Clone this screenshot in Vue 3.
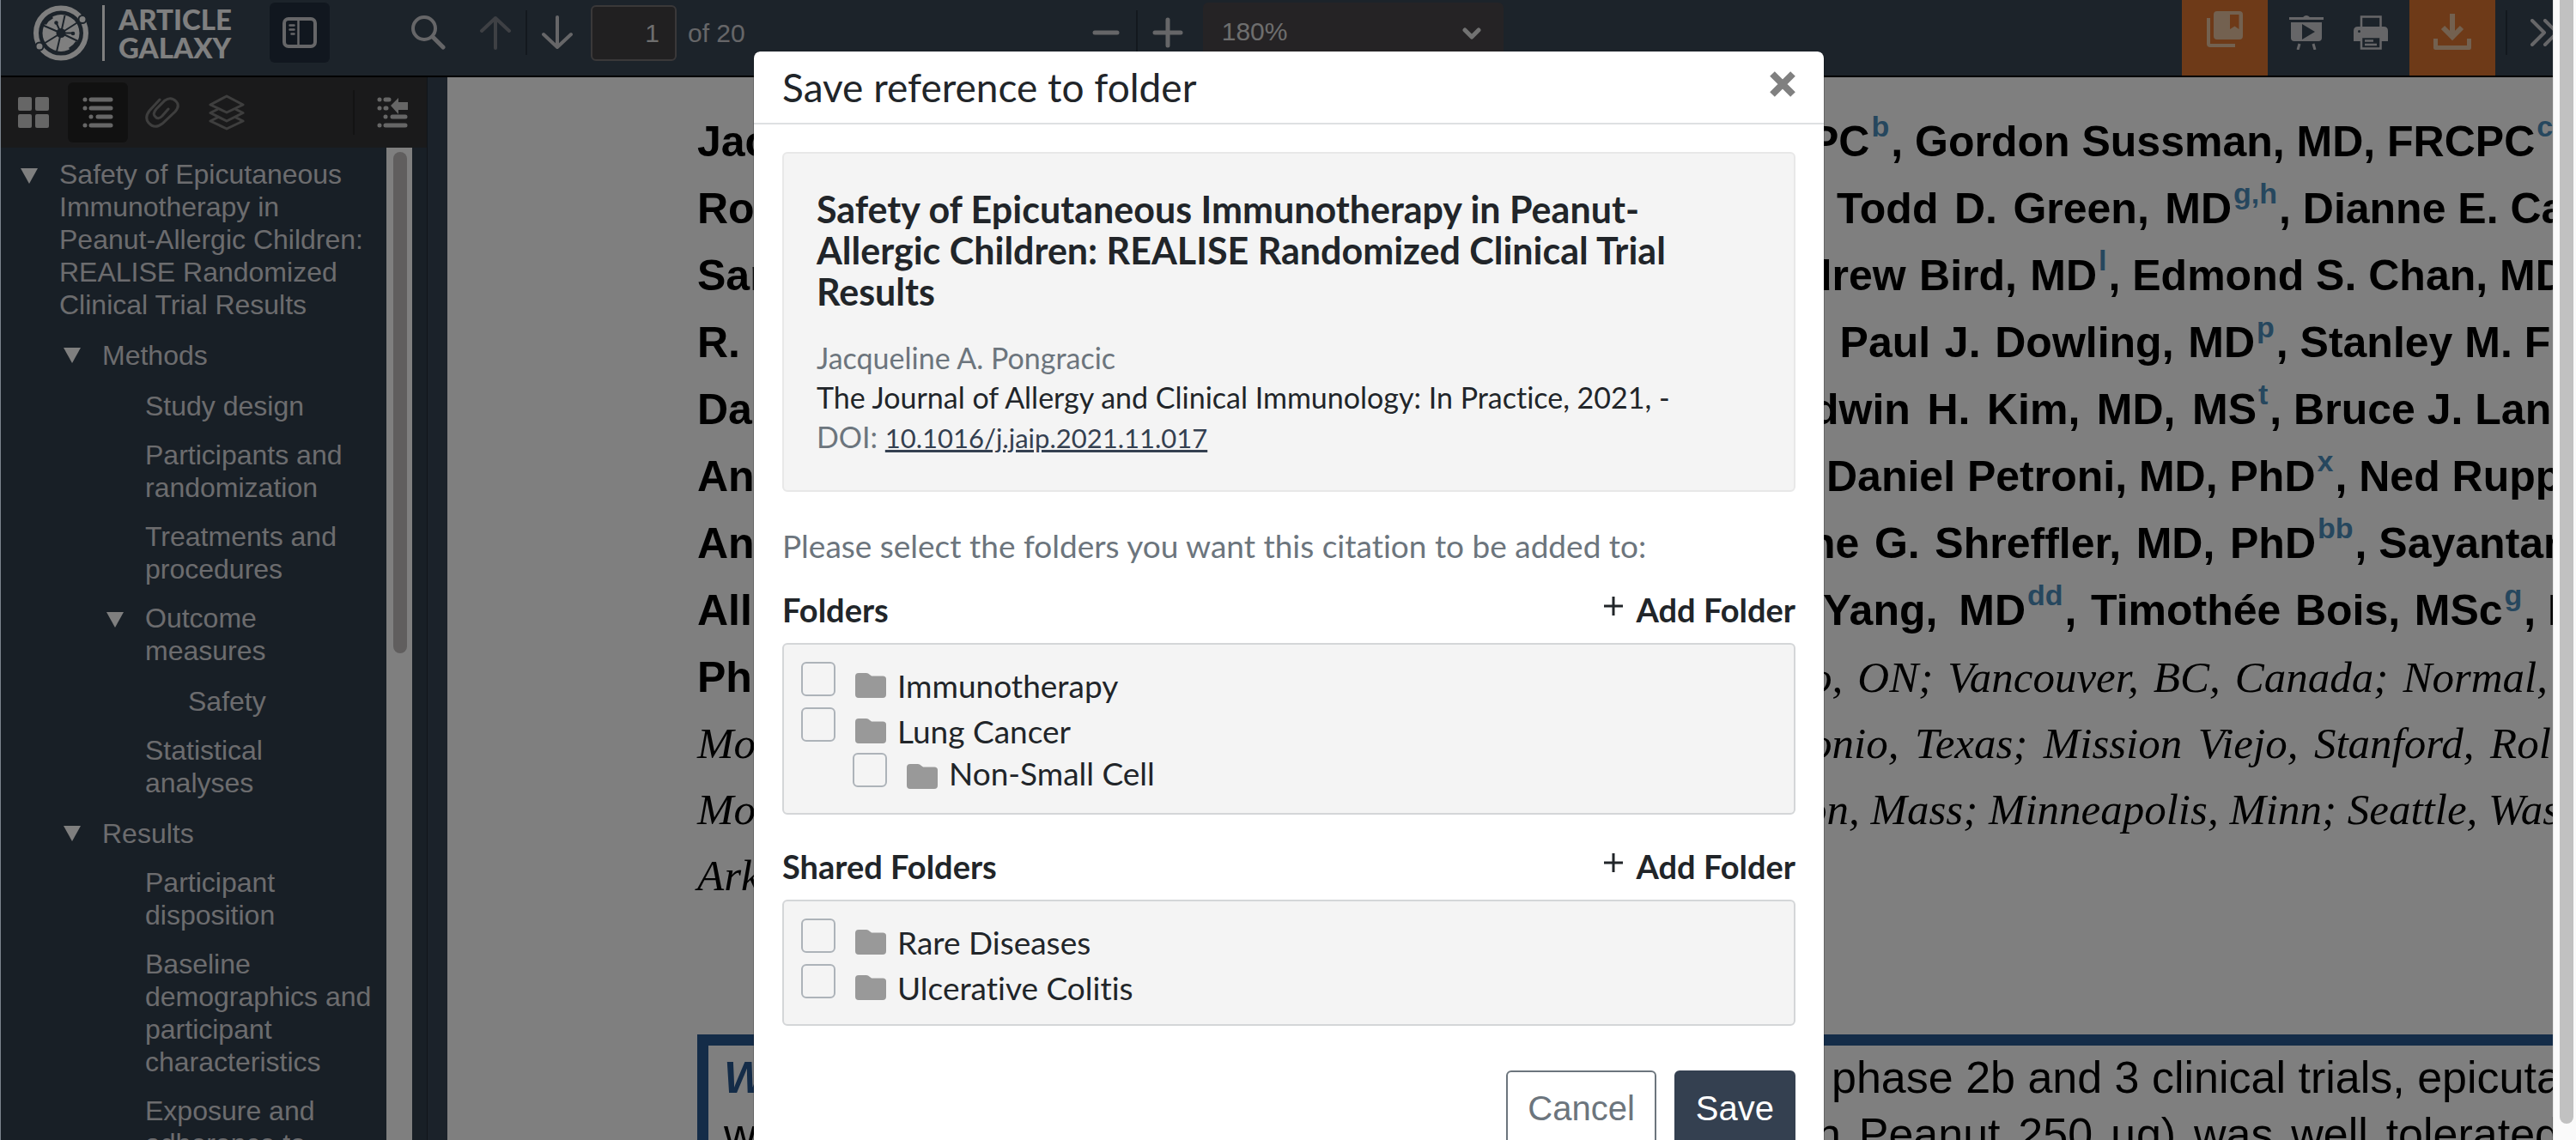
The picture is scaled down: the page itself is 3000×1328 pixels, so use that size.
<script setup>
import { ref } from 'vue'

const pageNumber = ref('1')
const zoomLevel = ref('180%')

const outline = [
  { level: 0, open: true, text: 'Safety of Epicutaneous Immunotherapy in Peanut-Allergic Children: REALISE Randomized Clinical Trial Results' },
  { level: 1, open: true, text: 'Methods' },
  { level: 2, text: 'Study design' },
  { level: 2, text: 'Participants and randomization' },
  { level: 2, text: 'Treatments and procedures' },
  { level: 2, open: true, text: 'Outcome measures' },
  { level: 3, text: 'Safety' },
  { level: 2, text: 'Statistical analyses' },
  { level: 1, open: true, text: 'Results' },
  { level: 2, text: 'Participant disposition' },
  { level: 2, text: 'Baseline demographics and participant characteristics' },
  { level: 2, text: 'Exposure and adherence to' }
]

// Each line holds two text runs; `at` is the distance from the text margin to the second run.
// A part is [text, superscript, justified width]; parts without a width keep their natural one.
const authorLines = [
  { start: 'Jac', at: 1296, run: [['PC', 'b'], [', Gordon Sussman, MD, FRCPC', 'c']] },
  { start: 'Ro', at: 1327, run: [['Todd D. Green, MD', 'g,h', 460], [', Dianne E. Car', '']] },
  { start: 'Sar', at: 1291, run: [['drew Bird, MD', 'l', 339], [', Edmond S. Chan, MD', '']] },
  { start: 'R.', at: 1300, run: [[', Paul J. Dowling, MD', 'p', 514], [', Stanley M. F', '']] },
  { start: 'Da', at: 1299, run: [['dwin H. Kim, MD, MS', 't', 517], [', Bruce J. Lans', '']] },
  { start: 'An', at: 1315, run: [['Daniel Petroni, MD, PhD', 'x'], [', Ned Rupp', '']] },
  { start: 'An', at: 1295, run: [['ne G. Shreffler, MD, PhD', 'bb', 590], [', Sayantan', '']] },
  { start: 'All', at: 1311, run: [['Yang, MD', 'dd', 236], [', Timothée Bois, MSc', 'g', 510], [', D', '']] },
  { start: 'Phi', at: 1296, place: 'o, ON; Vancouver, BC, Canada; Normal,', width: 859 }
]

const placeLines = [
  { start: 'Mo', at: 1296, place: 'onio, Texas; Mission Viejo, Stanford, Roll', width: 877 },
  { start: 'Mo', at: 1290, place: 'on, Mass; Minneapolis, Minn; Seattle, Wash' },
  { start: 'Ark', at: 1296, place: '' }
]

const px = (n) => (n ? { width: n + 'px' } : null)

const folderGroups = ref([
  {
    title: 'Folders',
    items: [
      { id: 'immuno', name: 'Immunotherapy', checked: false },
      { id: 'lung', name: 'Lung Cancer', checked: false },
      { id: 'nsc', name: 'Non-Small Cell', nested: true, checked: false }
    ]
  },
  {
    title: 'Shared Folders',
    items: [
      { id: 'rare', name: 'Rare Diseases', checked: false },
      { id: 'colitis', name: 'Ulcerative Colitis', checked: false }
    ]
  }
])
</script>

<template>
  <div class="screen">
    <div class="viewer">
      <header class="toolbar">
        <div class="brand">
          <svg class="brand-mark" viewBox="0 0 64 65">
            <circle cx="32" cy="32.500" r="29" fill="none" stroke="currentColor" stroke-width="6" />
            <circle cx="32" cy="32.500" r="21.500" fill="currentColor" />
            <g stroke="#384654" stroke-width="2" fill="#384654">
              <path d="M32 32.500L57 16.500M32 32.500L7 48M32 32.500L36.500 12M32 32.500L27 54M32 32.500L10 23M32 32.500L54 43M32 32.500L26.500 20.500M32 32.500H46" fill="none" />
              <circle cx="32" cy="32.500" r="4.500" />
              <circle cx="26.500" cy="20.500" r="1.300" />
              <circle cx="46" cy="33" r="1.300" />
            </g>
            <path d="M22 13.500A22 22 0 0 0 13 22M42 51.500A22 22 0 0 0 51 43" stroke="#384654" stroke-width="4" fill="none" />
            <circle cx="57" cy="16.500" r="4.500" fill="currentColor" stroke="#384654" stroke-width="2" />
            <circle cx="7" cy="48" r="4.500" fill="currentColor" stroke="#384654" stroke-width="2" />
          </svg>
          <span class="brand-rule"></span>
          <span class="brand-name"><span>ARTICLE</span><span>GALAXY</span></span>
        </div>
        <button class="tool toggle" aria-label="Toggle sidebar">
          <svg width="40" height="36" viewBox="0 0 40 36" fill="none" stroke="currentColor">
            <rect x="2" y="2" width="36" height="32" rx="5" stroke-width="4" />
            <path d="M18.500 3V33" stroke-width="2.500" />
            <path d="M8.500 9.500H13.500M8.500 14.500H13.500M10.500 19.500H13.500" stroke-width="2.500" stroke-linecap="round" />
          </svg>
        </button>
        <button class="tool search" aria-label="Find">
          <svg width="40" height="40" viewBox="0 0 40 40" fill="none" stroke="currentColor" stroke-linecap="round">
            <circle cx="15" cy="15" r="13" stroke-width="4" />
            <path d="M25 25L37 37" stroke-width="5" />
          </svg>
        </button>
        <button class="tool faded" aria-label="Previous page">
          <svg width="36" height="40" viewBox="0 0 36 40" fill="none" stroke="currentColor" stroke-width="4" stroke-linecap="round" stroke-linejoin="round">
            <path d="M18 38V3M2 18L18 3L34 18" />
          </svg>
        </button>
        <span class="divider"></span>
        <button class="tool" aria-label="Next page">
          <svg width="36" height="40" viewBox="0 0 36 40" fill="none" stroke="currentColor" stroke-width="4" stroke-linecap="round" stroke-linejoin="round">
            <path d="M18 2V37M2 22L18 37L34 22" />
          </svg>
        </button>
        <label class="pages"><input v-model="pageNumber" type="text" aria-label="Page" /><span>of 20</span></label>
        <div class="zoom">
          <button class="tool" aria-label="Zoom out">
            <svg width="36" height="36" viewBox="0 0 36 36" stroke="currentColor" stroke-width="5" stroke-linecap="round"><path d="M5 18H31" /></svg>
          </button>
          <span class="divider"></span>
          <button class="tool" aria-label="Zoom in">
            <svg width="36" height="36" viewBox="0 0 36 36" stroke="currentColor" stroke-width="5" stroke-linecap="round"><path d="M3 18H33M18 3V33" /></svg>
          </button>
          <div class="scale">
            <select v-model="zoomLevel" aria-label="Zoom"><option>180%</option></select>
            <svg width="22" height="16" viewBox="0 0 22 16" fill="none" stroke="currentColor" stroke-width="5" stroke-linecap="round" stroke-linejoin="round"><path d="M3 4L11 12L19 4" /></svg>
          </div>
        </div>
        <div class="actions">
          <button class="action accent high" aria-label="Save to library">
            <svg width="42" height="42" viewBox="0 0 42 42" fill="currentColor">
              <path d="M0 8H4V38H33V42H4Q0 42 0 38Z" />
              <path d="M12 0H38Q42 0 42 4V29Q42 33 38 33H12Q8 33 8 29V4Q8 0 12 0ZM27 4V21L32.500 17.500L37.500 21V4Z" fill-rule="evenodd" />
            </svg>
          </button>
          <button class="action present" aria-label="Presentation mode">
            <svg width="40" height="40" viewBox="0 0 40 40" fill="currentColor">
              <path d="M0 2H16Q20 -2 24 2H40V5H0Z" />
              <path d="M2 8H38V26Q38 30 34 30H6Q2 30 2 26ZM15 10V28L30 19Z" fill-rule="evenodd" />
              <path d="M12 33L10 40M28 33L30 40" stroke="currentColor" stroke-width="3" />
            </svg>
          </button>
          <button class="action print" aria-label="Print">
            <svg width="40" height="40" viewBox="0 0 40 40" fill="none" stroke="currentColor">
              <path d="M9 14V1.500H31.500V14" stroke-width="2.500" />
              <path d="M5 13H35Q40 13 40 18V30H32V25H8V30H0V18Q0 13 5 13Z" fill="currentColor" stroke="none" />
              <path d="M9 25V38.500H31.500V25Z" fill="#384654" stroke-width="2.500" />
              <path d="M13 29.500H23M13 34H27" stroke-width="2.500" />
              <circle cx="6.500" cy="18.500" r="1.500" fill="#384654" stroke="none" />
            </svg>
          </button>
          <button class="action accent" aria-label="Download">
            <svg width="44" height="42" viewBox="0 0 44 42" fill="none" stroke="currentColor">
              <path d="M22 0V26" stroke-width="6" />
              <path d="M11 16L22 27L33 16" stroke-width="6" />
              <path d="M2.500 29V39.500H41.500V29" stroke-width="5" stroke-linejoin="round" />
            </svg>
          </button>
          <span class="divider"></span>
          <button class="more" aria-label="Tools">
            <svg width="40" height="32" viewBox="0 0 40 32" fill="none" stroke="currentColor" stroke-width="4" stroke-linecap="round" stroke-linejoin="round">
              <path d="M3 2L17 16L3 30M18 2L32 16L18 30" />
            </svg>
          </button>
        </div>
      </header>

      <div class="body">
        <aside class="sidebar">
          <nav class="tabs">
            <button class="tab" aria-label="Thumbnails">
              <svg width="36" height="36" viewBox="0 0 36 36" fill="currentColor">
                <rect width="16" height="16" rx="2" /><rect x="20" width="16" height="16" rx="2" />
                <rect y="20" width="16" height="16" rx="2" /><rect x="20" y="20" width="16" height="16" rx="2" />
              </svg>
            </button>
            <button class="tab active" aria-label="Outline">
              <svg width="36" height="36" viewBox="0 0 36 36" stroke="currentColor" stroke-width="5" stroke-linecap="round">
                <path d="M3 3H3.010M10 3H33M3 13H3.010M10 13H33M10 23H10.010M18 23H33M3 33H3.010M10 33H33" />
              </svg>
            </button>
            <button class="tab faded" aria-label="Attachments">
              <svg width="40" height="36" viewBox="0 0 40 36" fill="none" stroke="currentColor" stroke-width="3" stroke-linecap="round">
                <path d="M17 3L5 16Q-1 24 4 30Q11 38 20 31L35 17Q41 10 36 5Q30 -1 23 4L13 14Q8 20 12 23Q15 27 20 22L27 14" />
              </svg>
            </button>
            <button class="tab faded" aria-label="Layers">
              <svg width="42" height="42" viewBox="0 0 42 42" fill="none" stroke="currentColor" stroke-width="3" stroke-linejoin="round">
                <path d="M21 2L40 12L21 21L2 12Z" />
                <path d="M11 17L2 21.500L21 31L40 21.500L31 17M11 26.500L2 31L21 40L40 31L31 26.500" />
              </svg>
            </button>
            <span class="divider"></span>
            <button class="tab" aria-label="Current outline item">
              <svg width="36" height="36" viewBox="0 0 36 36" stroke="currentColor" stroke-width="5" stroke-linecap="round">
                <path d="M3 3H3.010M10 3H14M3 13H3.010M10 13H11M10 23H10.010M18 23H33M3 33H3.010M10 33H33" />
                <path d="M16 10L25 1V6H36V15H25V20Z" fill="currentColor" stroke="none" />
              </svg>
            </button>
          </nav>
          <div class="outline">
            <ul>
              <li v-for="(item, i) in outline" :key="i" :class="['entry', 'level-' + item.level]">
                <span class="twisty"><i v-if="item.open"></i></span>
                <a href="#">{{ item.text }}</a>
              </li>
            </ul>
            <div class="track"><div class="thumb"></div></div>
          </div>
        </aside>

        <main class="page">
          <div class="authors">
            <p v-for="(line, i) in authorLines" :key="i" class="line">
              <b :style="px(line.at)">{{ line.start }}</b>
              <em v-if="line.place" class="spread" :style="px(line.width)">{{ line.place }}</em>
              <template v-for="(part, k) in line.run" v-else :key="k">
                <b :class="{ spread: part[2] }" :style="px(part[2])">{{ part[0] }}</b>
                <sup v-if="part[1]">{{ part[1] }}</sup>
              </template>
            </p>
          </div>
          <div class="places">
            <p v-for="(line, i) in placeLines" :key="i" class="line">
              <em :style="px(line.at)">{{ line.start }}</em>
              <em :class="{ spread: line.width }" :style="px(line.width)">{{ line.place }}</em>
            </p>
          </div>
          <section class="summary">
            <p><span class="lead">W</span><span>phase 2b and 3 clinical trials, epicuta</span></p>
            <p><span class="second">w</span><span class="spread full">n Peanut 250 µg) was well tolerated</span></p>
          </section>
        </main>
      </div>
      <div class="shade"></div>
    </div>
    <div class="window-scroll"><div></div></div>

    <div class="dialog-layer">
      <section class="dialog" role="dialog" aria-labelledby="dialog-title">
        <header class="dialog-head">
          <h1 id="dialog-title">Save reference to folder</h1>
          <button class="close" aria-label="Close">
            <svg width="30" height="30" viewBox="0 0 30 30" fill="none" stroke="currentColor" stroke-width="8"><path d="M3 3L27 27M27 3L3 27" /></svg>
          </button>
        </header>
        <div class="dialog-body">
          <article class="citation">
            <h2>Safety of Epicutaneous Immunotherapy in Peanut-Allergic Children: REALISE Randomized Clinical Trial Results</h2>
            <p class="muted">Jacqueline A. Pongracic</p>
            <p>The Journal of Allergy and Clinical Immunology: In Practice, 2021, -</p>
            <p class="muted">DOI: <a href="#">10.1016/j.jaip.2021.11.017</a></p>
          </article>
          <p class="prompt">Please select the folders you want this citation to be added to:</p>
          <section v-for="group in folderGroups" :key="group.title" class="group">
            <div class="group-head">
              <h3>{{ group.title }}</h3>
              <button class="add">
                <svg width="22" height="22" viewBox="0 0 22 22" stroke="currentColor" stroke-width="3"><path d="M0 11H22M11 0V22" /></svg>
                Add Folder
              </button>
            </div>
            <ul class="folders">
              <li v-for="item in group.items" :key="item.id" :class="{ nested: item.nested }">
                <input :id="item.id" v-model="item.checked" type="checkbox" />
                <label :for="item.id">
                  <svg width="36" height="29" viewBox="0 0 36 29" fill="#999"><path d="M4 0H13Q15 0 17 2L19 3.500H32Q36 3.500 36 7V25Q36 29 32 29H4Q0 29 0 25V4Q0 0 4 0Z" /></svg>
                  <span>{{ item.name }}</span>
                </label>
              </li>
            </ul>
          </section>
          <footer class="buttons">
            <button class="cancel">Cancel</button>
            <button class="save">Save</button>
          </footer>
        </div>
      </section>
    </div>
  </div>
</template>

<style>
html,
body {
  overflow: hidden;
}
</style>

<style scoped>
* {
  box-sizing: border-box;
  margin: 0;
  padding: 0;
}
.screen {
  position: relative;
  display: flex;
  height: 100vh;
  overflow: hidden;
  font-family: "Liberation Sans", Arial, sans-serif;
}
button {
  border: 0;
  background: none;
  color: inherit;
  font: inherit;
}
svg {
  display: block;
}
ul {
  list-style: none;
}
.viewer {
  position: relative;
  flex: 1;
  min-width: 0;
  display: flex;
  flex-direction: column;
  overflow: hidden;
  border-left: 1px solid #7a828c;
}
.shade {
  position: absolute;
  inset: 0;
  background: rgba(0, 0, 0, 0.5);
}
.toolbar {
  flex: none;
  display: flex;
  height: 90px;
  border-bottom: 2px solid #000;
  background: #384654;
  color: #cdcdd1;
  font-size: 30px;
}
.brand {
  display: flex;
  width: 313px;
  padding: 6px 0 0 38px;
  color: #fff;
}
.brand-mark {
  width: 64px;
  height: 65px;
}
.brand-rule {
  width: 3px;
  height: 65px;
  margin: 0 16px;
  background: #fff;
}
.brand-name {
  display: flex;
  flex-direction: column;
  font: 900 33px/33px Lato, sans-serif;
}
.tool {
  display: flex;
  align-items: center;
  justify-content: center;
  width: 70px;
  height: 70px;
  margin-top: 3px;
}
.toggle {
  border-radius: 6px;
  background: #222e3e;
}
.search {
  margin-left: 80px;
}
.faded {
  color: #7c8089;
}
.toolbar .faded {
  margin-left: 8px;
}
.divider {
  flex: none;
  width: 2px;
  height: 52px;
  margin-top: 12px;
  background: #26303c;
}
.pages {
  display: flex;
  align-items: center;
  gap: 13px;
  height: 65px;
  margin: 6px 0 0 4px;
}
.pages input {
  width: 100px;
  height: 65px;
  padding: 0 18px;
  border: 2px solid #747072;
  border-radius: 6px;
  background: #424042;
  color: #dcdcdc;
  font: inherit;
  text-align: right;
}
.zoom {
  display: flex;
  margin-left: 385px;
}
.scale {
  position: relative;
  width: 350px;
  height: 70px;
  margin: 3px 0 0 6px;
}
.scale select {
  width: 100%;
  height: 100%;
  padding: 0 22px 4px;
  border: 0;
  border-radius: 6px;
  appearance: none;
  background: #4a464a;
  color: #dcdcdc;
  font: inherit;
}
.scale svg {
  position: absolute;
  right: 26px;
  top: 28px;
  color: #e4e4e4;
}
.actions {
  display: flex;
  margin-left: auto;
}
.action {
  display: flex;
  justify-content: center;
  width: 75px;
  padding-top: 18px;
}
.action.present {
  width: 90px;
}
.action.print {
  padding-right: 15px;
}
.action.accent {
  width: 100px;
  padding-top: 16px;
  background: #dc7430;
  color: #e6c2a0;
}
.action.high {
  padding-top: 13px;
}
.actions .divider {
  margin-left: 12px;
}
.more {
  width: 53px;
  padding: 22px 0 0 26px;
  overflow: hidden;
  display: flex;
}
.more svg {
  flex: none;
}
.body {
  flex: 1;
  min-height: 0;
  display: flex;
  background: #364454;
}
.sidebar {
  flex: none;
  display: flex;
  flex-direction: column;
  width: 497px;
  border-right: 1px solid #202a34;
  background: #303e4c;
}
.tabs {
  flex: none;
  display: flex;
  align-items: center;
  height: 82px;
  padding-left: 3px;
  background: #353536;
  color: #cdcdcd;
}
.tab {
  display: flex;
  align-items: center;
  justify-content: center;
  width: 70px;
  height: 70px;
  margin-right: 5px;
}
.tab.active {
  border-radius: 6px;
  background: #232323;
}
.tab.faded {
  color: #7c7c7c;
}
.tabs .divider {
  margin: 0 9px 0 auto;
  background: #262626;
}
.outline {
  flex: 1;
  min-height: 0;
  display: flex;
  padding-right: 17px;
  overflow: hidden;
}
.outline ul {
  flex: 1;
  display: flex;
  flex-direction: column;
  gap: 19px;
  padding: 12px 12px 0 23px;
}
.entry {
  display: flex;
  align-items: flex-end;
  flex: none;
  min-height: 40px;
}
.level-1 {
  padding-left: 50px;
}
.level-2 {
  padding-left: 100px;
}
.level-3 {
  padding-left: 150px;
}
.twisty {
  flex: none;
  align-self: stretch;
  width: 45px;
  padding-top: 12px;
}
.twisty i {
  display: block;
  width: 20px;
  border: 10px solid transparent;
  border-top: 18px solid #fff;
  border-bottom: 0;
}
.entry a {
  color: #d8d8dc;
  font-size: 32px;
  line-height: 38px;
  text-decoration: none;
}
.track {
  width: 30px;
  padding: 5px 6px 0 8px;
  background: #fff;
}
.thumb {
  height: 584px;
  border-radius: 8px;
  background: #c0bcbc;
}
.page {
  flex: 1;
  min-width: 0;
  margin-left: 23px;
  padding: 36px 0 0 291px;
  overflow: hidden;
  background: #fff;
  color: #000;
  white-space: nowrap;
}
.line {
  display: flex;
  align-items: baseline;
  height: 78px;
  font-size: 50px;
  line-height: 78px;
}
.line > * {
  flex: none;
}
.places .line {
  height: 77px;
  line-height: 77px;
}
.line em {
  font-family: "Liberation Serif", "Times New Roman", serif;
  font-size: 51px;
}
.line b {
  white-space: pre;
}
.line .spread {
  white-space: normal;
}
.line sup {
  align-self: flex-start;
  margin-top: -18px;
  padding: 0 2px;
  color: #4c8ebc;
  font-size: 34px;
  font-weight: bold;
}
.spread {
  text-align: justify;
  text-align-last: justify;
}
.summary {
  margin: 146px -26px 0 0;
  padding: 4px 18px;
  border: 13px solid #285890;
  font-size: 52px;
  line-height: 66px;
}
.summary p {
  display: flex;
}
.summary span {
  flex: none;
}
.lead {
  width: 1290px;
  color: #285890;
  font-weight: bold;
  font-style: italic;
}
.second {
  width: 1272px;
}
.full {
  width: 866px;
}
.window-scroll {
  width: 27px;
  padding: 0 3px 19px 7px;
  border-left: 1px solid #e8e8e8;
  background: #fafafa;
}
.window-scroll div {
  height: 100%;
  border-radius: 0 0 8px 8px;
  background: #c1c1c1;
}
.dialog-layer {
  position: absolute;
  inset: 0;
  display: flex;
  justify-content: center;
  align-items: flex-start;
  padding: 60px 0 0 2px;
}
.dialog {
  width: 1248px;
  border: 1px solid rgba(0, 0, 0, 0.2);
  border-top: 0;
  border-radius: 8px;
  background: #fff;
  background-clip: padding-box;
  color: #212529;
  font-family: Lato, sans-serif;
  font-variant-ligatures: none;
}
.dialog-head {
  display: flex;
  justify-content: space-between;
  align-items: flex-start;
  height: 85px;
  padding: 14px 33px 0;
  border-bottom: 2px solid #dee0e2;
}
.dialog-head h1 {
  font-size: 46px;
  font-weight: 400;
  line-height: 56px;
}
.close {
  margin-top: 9px;
  color: #808080;
}
.dialog-body {
  padding: 32px 33px 40px;
}
.citation {
  height: 396px;
  padding: 41px 90px 0 38px;
  border: 2px solid #e8e8e8;
  border-radius: 6px;
  background: #f4f4f4;
}
.citation h2 {
  margin-bottom: 30px;
  font-size: 43px;
  font-weight: 700;
  line-height: 48px;
}
.citation p {
  font-size: 34px;
  line-height: 46px;
}
.citation a {
  color: #344050;
  font-size: 31px;
}
.muted {
  color: #6c757d;
}
.prompt {
  margin: 38px 0 24px;
  color: #6c757d;
  font-size: 37px;
  line-height: 50px;
}
.group {
  margin-bottom: 35px;
}
.group-head {
  display: flex;
  justify-content: space-between;
  height: 64px;
  font-size: 38px;
  line-height: 50px;
}
.group-head h3 {
  font-size: 38px;
}
.add {
  display: flex;
  gap: 16px;
  font-weight: 700;
}
.add svg {
  margin-top: 10px;
}
.folders {
  padding: 20px 20px 17px;
  border: 2px solid #d4d6d8;
  border-radius: 6px;
  background: #f4f4f4;
}
.folders li {
  display: flex;
  height: 53px;
}
.folders .nested {
  padding-left: 60px;
}
.folders input {
  flex: none;
  width: 40px;
  height: 40px;
  border: 2px solid #adb3b9;
  border-radius: 6px;
  appearance: none;
}
.folders label {
  display: flex;
  gap: 13px;
  padding-left: 23px;
  font-size: 37px;
  line-height: 55px;
}
.folders label svg {
  margin-top: 13px;
}
.folders .nested label {
  line-height: 48px;
}
.buttons {
  display: flex;
  justify-content: flex-end;
  gap: 21px;
  margin-top: 52px;
  font-family: "Liberation Sans", Arial, sans-serif;
  font-size: 40px;
}
.buttons button {
  height: 88px;
  padding: 0 23px;
  border: 2px solid #6c757d;
  border-radius: 6px;
  color: #6c757d;
}
.buttons .save {
  border-color: #344050;
  background: #344050;
  color: #fff;
}
</style>
